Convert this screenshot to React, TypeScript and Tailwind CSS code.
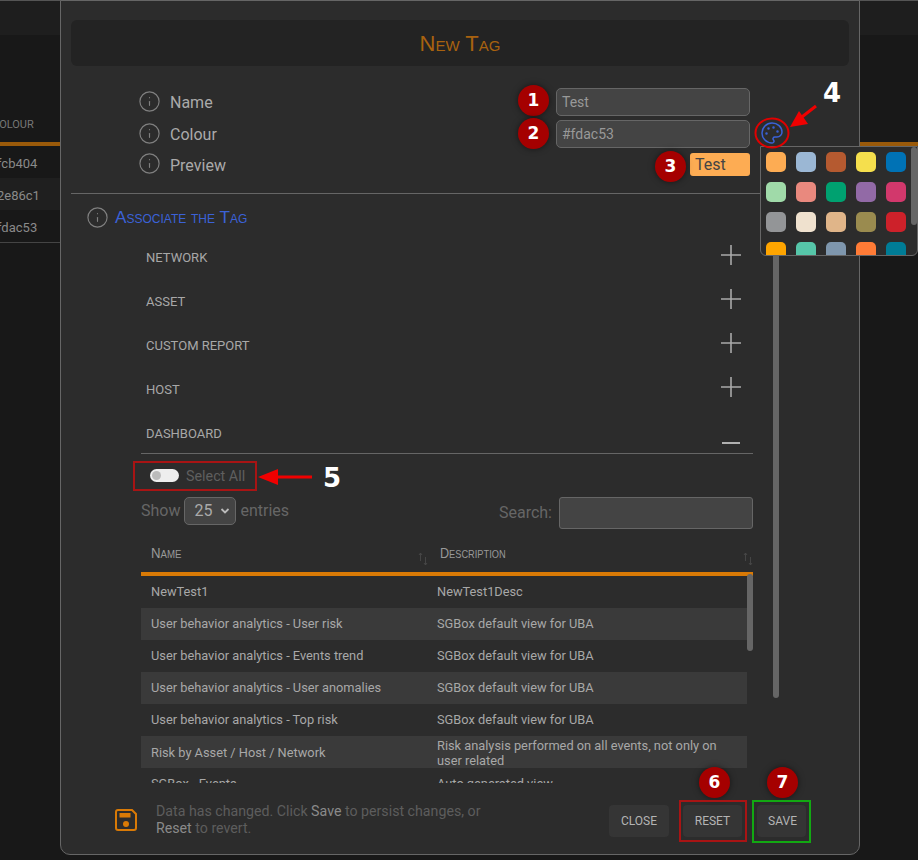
import { Info, Palette } from "lucide-react";

const swatches = [
  "#fdac53", "#9bb7d4", "#b55a30", "#f5df4d", "#0072b5",
  "#a0daa9", "#e9897e", "#00a170", "#926aa6", "#d2386c",
  "#939597", "#efe1ce", "#e0b589", "#9a8b4f", "#cd212a",
  "#ffa500", "#56c6a9", "#7e96ad", "#ff7b36", "#007c96",
];

const rows: [string, string][] = [
  ["NewTest1", "NewTest1Desc"],
  ["User behavior analytics - User risk", "SGBox default view for UBA"],
  ["User behavior analytics - Events trend", "SGBox default view for UBA"],
  ["User behavior analytics - User anomalies", "SGBox default view for UBA"],
  ["User behavior analytics - Top risk", "SGBox default view for UBA"],
  ["Risk by Asset / Host / Network", "Risk analysis performed on all events, not only on user related"],
  ["SGBox - Events", "Auto generated view"],
];

function Badge({ n, className }: { n: number; className: string }) {
  return (
    <div className={`absolute flex h-[31px] w-[31px] items-center justify-center rounded-full bg-[#a50000] font-['DejaVu_Sans',sans-serif] text-[17px] font-bold text-white shadow-[0_0_6px_rgba(0,0,0,0.5)] ${className}`}>
      {n}
    </div>
  );
}

function PlusIcon() {
  return (
    <svg width="20" height="20" viewBox="0 0 20 20" className="mt-[-2px] text-[#a9a9a9]">
      <path d="M0 10H20M10 0V20" stroke="currentColor" strokeWidth="1.6" />
    </svg>
  );
}

function AccRow({ label, open }: { label: string; open?: boolean }) {
  return (
    <div className={`flex h-[44px] items-center justify-between pl-[5px] pr-[12px] text-[13px] text-[#a8a8a8] ${open ? "border-b border-[#666]" : ""}`}>
      <span className="pt-[4px]">{label}</span>
      {open ? (
        <svg width="20" height="20" viewBox="0 0 20 20" className="mt-[22px] text-[#b0b0b0]">
          <path d="M1 10H19" stroke="currentColor" strokeWidth="2" />
        </svg>
      ) : (
        <PlusIcon />
      )}
    </div>
  );
}

function SortArrows() {
  return (
    <svg width="10" height="14" viewBox="0 0 10 14" className="text-[#484848]">
      <path d="M2.5 9V1M1 3l1.5-2L4 3M7.5 5v8M6 11l1.5 2L9 11" stroke="currentColor" strokeWidth="0.9" fill="none" />
    </svg>
  );
}

function Label({ text }: { text: string }) {
  return (
    <div className="flex items-center gap-[9px]">
      <Info size={23} strokeWidth={1.2} className="mt-[-2px] text-[#808080]" />
      <span className="pt-[2px]">{text}</span>
    </div>
  );
}

export default function App() {
  return (
    <div className="relative h-[860px] w-[918px] overflow-hidden bg-[#181818] font-['Roboto',sans-serif]">
      {/* page behind the dialog */}
      <div className="h-[35px] border-t border-[#555] bg-[#1e1e1e]" />
      <div className="flex h-[107px] items-end justify-start">
        <div className="mb-[5px] h-[20px] w-[60px] overflow-hidden text-[11px] text-[#777]">
          <span className="ml-[-8px] block whitespace-nowrap">COLOUR</span>
        </div>
      </div>
      <div className="h-[4px] bg-[#9a5a0a]" />
      {["#fcb404", "#2e86c1", "#fdac53"].map((c, i) => (
        <div key={c} className={`flex h-[32px] items-center pt-[4px] ${i === 1 ? "bg-[#1f1f1f]" : ""}`}>
          <div className="w-[60px] overflow-hidden text-[13px] text-[#8a8a8a]">
            <span className="ml-[-11px] block">{c}</span>
          </div>
        </div>
      ))}
      <div className="h-[1px] bg-[#444]" />

      {/* dialog */}
      <div className="absolute left-[60px] top-0 flex h-[855px] w-[800px] flex-col rounded-b-[10px] border border-[#666] bg-[#2c2c2c] px-[10px]">
        <div className="mt-[19px] flex h-[46px] items-center justify-center rounded-[6px] bg-[#232323] font-['Liberation_Sans',sans-serif] text-[22px] text-[#a8620f] [font-variant-caps:small-caps]">
          <span>New Tag</span>
        </div>

        <div className="pl-[67px] pr-[99px] text-[16px] text-[#aaa]">
          <div className="mt-[22px] flex h-[28px] items-center justify-between">
            <Label text="Name" />
            <div className="flex h-[28px] w-[194px] items-center rounded-[5px] border border-[#666] bg-[#444] px-[5px] text-[14px] text-[#999]">Test</div>
          </div>
          <div className="mt-[4px] flex h-[28px] items-center justify-between">
            <Label text="Colour" />
            <div className="flex h-[28px] w-[194px] items-center rounded-[5px] border border-[#666] bg-[#444] px-[5px] text-[14px] text-[#999]">#fdac53</div>
          </div>
          <div className="mt-[5px] flex h-[23px] items-center justify-between">
            <Label text="Preview" />
            <div className="flex h-[23px] w-[60px] items-center rounded-[3px] bg-[#fdac53] px-[5px] text-[16px] text-[#444]">Test</div>
          </div>
        </div>

        <div className="mt-[17px] border-t border-[#666]" />

        <div className="min-h-0 flex-1 overflow-hidden">
          <div className="mt-[13px] flex h-[20px] items-center gap-[6px] pl-[15px]">
            <Info size={23} strokeWidth={1.2} className="shrink-0 text-[#808080]" />
            <span className="pt-[1px] font-['Liberation_Sans',sans-serif] text-[17.2px] text-[#3b62d8] [font-variant-caps:small-caps]">Associate the Tag</span>
          </div>

          <div className="ml-[70px] mt-[7px] w-[612px]">
            <AccRow label="NETWORK" />
            <AccRow label="ASSET" />
            <AccRow label="CUSTOM REPORT" />
            <AccRow label="HOST" />
            <AccRow label="DASHBOARD" open />

            <div className="mt-[14px] flex h-[14px] items-center gap-[7px] pl-[9px] text-[14.3px] text-[#5f5f5f]">
              <div className="flex h-[13px] w-[29px] items-center rounded-full bg-[#eee] pl-[2px]">
                <div className="h-[9px] w-[9px] rounded-full bg-[#bbb]" />
              </div>
              <span className="pt-[4px]">Select All</span>
            </div>

            <div className="mt-[15px] flex items-start justify-between text-[16px] text-[#666]">
              <div className="flex h-[28px] items-center gap-[4px]">
                <span>Show</span>
                <div className="flex h-[28px] w-[52px] items-center justify-between rounded-[5px] border border-[#666] bg-[#444] pl-[9px] pr-[5px] text-[#aaa]">
                  <span>25</span>
                  <svg width="10" height="8" viewBox="0 0 10 8"><path d="M1.5 2L5 5.5L8.5 2" stroke="#bbb" strokeWidth="1.8" fill="none" /></svg>
                </div>
                <span>entries</span>
              </div>
              <div className="flex h-[32px] items-center gap-[7px]">
                <span>Search:</span>
                <div className="h-[32px] w-[194px] rounded-[3px] border border-[#666] bg-[#444]" />
              </div>
            </div>

            <div className="mt-[6px] flex h-[41px] items-center border-b-[4px] border-[#d97a06] font-['Liberation_Sans',sans-serif] text-[15px] text-[#999] [font-variant-caps:small-caps]">
              <div className="flex w-[296px] items-center justify-between pl-[10px]">
                <span className="origin-left scale-x-[0.88]">Name</span>
                <span className="mr-[9px] pt-[10px]"><SortArrows /></span>
              </div>
              <div className="flex flex-1 items-center justify-between pl-[3px]">
                <span className="origin-left scale-x-[0.84]">Description</span>
                <span className="pt-[10px]"><SortArrows /></span>
              </div>
            </div>

            <div className="relative h-[300px] pr-[6px]">
              {rows.map((r, i) => (
                <div key={r[0]} className={`grid h-[32px] grid-cols-[296px_1fr] items-center pb-[2px] text-[12.8px] leading-[15px] text-[#a8a8a8] ${i % 2 === 1 ? "bg-[#3a3a3a]" : ""}`}>
                  <div className="pl-[10px]">{r[0]}</div>
                  <div className={`pr-[24px] ${i === 5 ? "pt-[2px]" : ""}`}>{r[1]}</div>
                </div>
              ))}
              <div className="absolute right-0 top-[-2px] h-[77px] w-[6px] rounded-full bg-[#666]" />
            </div>
          </div>
        </div>

        <div className="flex h-[71px] shrink-0 items-start">
          <svg width="22" height="22" viewBox="0 0 22 22" className="ml-[44px] mt-[26px] shrink-0" fill="none">
            <path d="M3 1H17L21 5V19a2 2 0 0 1-2 2H3a2 2 0 0 1-2-2V3a2 2 0 0 1 2-2Z" stroke="#d97a06" strokeWidth="2" />
            <rect x="4.5" y="4" width="11" height="4.5" fill="#d97a06" />
            <circle cx="11" cy="15" r="3" fill="#d97a06" />
          </svg>
          <p className="ml-[19px] mt-[20px] w-[340px] text-[14.2px] leading-[17px] text-[#5d5d5d]">
            Data has changed. Click <span className="text-[#8a8a8a]">Save</span> to persist changes, or <span className="text-[#8a8a8a]">Reset</span> to revert.
          </p>
          <div className="ml-auto mr-[43px] mt-[22px] flex gap-[14px] text-[12px] text-[#b4b4b4]">
            <button className="h-[32px] w-[60px] rounded-[4px] bg-[#353535]">CLOSE</button>
            <button className="h-[32px] w-[59px] rounded-[4px] bg-[#353535]">RESET</button>
            <button className="ml-[1px] h-[32px] w-[49px] rounded-[4px] bg-[#353535] pl-[2px]">SAVE</button>
          </div>
        </div>
      </div>

      {/* outer scrollbar */}
      <div className="absolute left-[773px] top-[200px] h-[498px] w-[6px] rounded-full bg-[#666]" />

      {/* palette */}
      <Palette size={24} strokeWidth={1.5} className="absolute left-[760px] top-[121px] text-[#3b62d8]" />
      <div className="absolute left-[760px] top-[146px] h-[110px] w-[158px] overflow-hidden rounded-b-[6px] border border-[#666] bg-[#2c2c2c] pl-[5px] pt-[5px]">
        <div className="grid grid-cols-[repeat(5,20px)] gap-[10px]">
          {swatches.map((c) => (
            <div key={c} className="h-[20px] w-[20px] rounded-[5px]" style={{ backgroundColor: c }} />
          ))}
        </div>
        <div className="absolute right-0 top-0 h-[78px] w-[6px] rounded-full bg-[#666]" />
      </div>

      {/* annotations */}
      <Badge n={1} className="left-[518px] top-[85px]" />
      <Badge n={2} className="left-[518px] top-[118px]" />
      <Badge n={3} className="left-[655px] top-[151px]" />
      <Badge n={6} className="left-[699px] top-[767px]" />
      <Badge n={7} className="left-[767px] top-[767px]" />

      <div className="absolute left-[823px] top-[77px] font-['DejaVu_Sans',sans-serif] text-[26px] font-bold leading-[32px] text-white">4</div>
      <div className="absolute left-[323px] top-[462px] font-['DejaVu_Sans',sans-serif] text-[26px] font-bold leading-[32px] text-white">5</div>

      <svg className="absolute left-0 top-0" width="918" height="860" fill="none">
        <ellipse cx="772" cy="133" rx="16.5" ry="14.5" stroke="#e00000" strokeWidth="2" />
        <path d="M816 106L798 120" stroke="#f00000" strokeWidth="3" />
        <path d="M790 127L799 111L808 124Z" fill="#f00000" />
        <path d="M312 477H276" stroke="#f00000" strokeWidth="3" />
        <path d="M258 477L278 469V485Z" fill="#f00000" />
        <rect x="134" y="462" width="122" height="28" stroke="#a81414" strokeWidth="2" />
        <rect x="680" y="801" width="66" height="40" stroke="#a81414" strokeWidth="2" />
        <rect x="753" y="801" width="57" height="41" stroke="#12a812" strokeWidth="2" />
      </svg>
    </div>
  );
}
